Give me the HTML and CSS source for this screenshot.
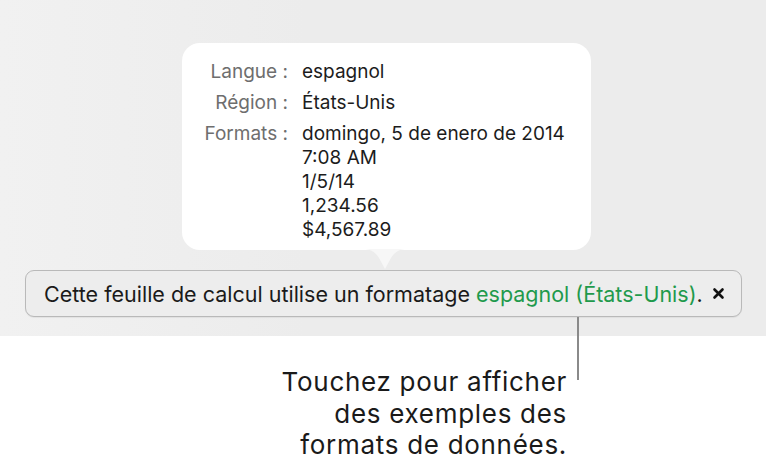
FILE: index.html
```html
<!DOCTYPE html>
<html lang="fr">
<head>
<meta charset="utf-8">
<link rel="stylesheet" href="styles.css">
</head>
<body>
<div class="stage">
  <div class="popover">
    <div class="grid">
      <div class="label">Langue :</div>
      <div class="value">espagnol</div>
      <div class="label">Région :</div>
      <div class="value">États-Unis</div>
      <div class="label">Formats :</div>
      <div class="value">domingo, 5 de enero de 2014<br>7:08 AM<br>1/5/14<br>1,234.56<br>$4,567.89</div>
    </div>
    <svg class="arrow" width="44" height="21" viewBox="0 0 44 21"><path d="M0 0 C8 0 12 3 16 9 L22 20 L28 9 C32 3 36 0 44 0 Z" fill="#f7f7f7"/></svg>
  </div>
  <div class="bar">
    <span class="msg">Cette feuille de calcul utilise un formatage <span class="green">espagnol (États-Unis)</span>.</span>
    <svg class="close" width="13" height="13" viewBox="0 0 13 13"><path d="M2.5 2.5 L10.5 10.5 M10.5 2.5 L2.5 10.5" stroke="#111" stroke-width="2.6" stroke-linecap="round"/></svg>
  </div>
</div>
<div class="leader"></div>
<div class="callout">Touchez pour afficher<br>des exemples des<br>formats de données.</div>
</body>
</html>
```
FILE: styles.css
```css
html, body {
  margin: 0;
  padding: 0;
  background: #ffffff;
  font-family: Inter, Roboto, "Liberation Sans", sans-serif;
}
body {
  width: 766px;
  height: 468px;
  overflow: hidden;
  position: relative;
}
.stage {
  height: 336px;
  box-sizing: border-box;
  padding: 43px 0 0 25px;
  background: linear-gradient(90deg, #f1f1f1 0%, #ececec 40%, #ececec 100%);
}
.popover {
  position: relative;
  width: 409px;
  height: 207px;
  margin-left: 157px;
  box-sizing: border-box;
  padding-top: 17px;
  background: #ffffff;
  border-radius: 18px;
}
.grid {
  display: grid;
  grid-template-columns: 106px 1fr;
  column-gap: 14px;
  row-gap: 7px;
  font-size: 19px;
  line-height: 24px;
}
.label {
  text-align: right;
  color: #6e6e6e;
}
.value {
  color: #1c1c1c;
}
.arrow {
  position: absolute;
  left: 181px;
  bottom: -20px;
  display: block;
}
.bar {
  width: 717px;
  height: 47px;
  margin-top: 20px;
  box-sizing: border-box;
  border: 1px solid #b9b9b9;
  border-radius: 9px;
  background: #ededed;
  box-shadow: 0 1px 1px rgba(0,0,0,0.06);
  display: flex;
  align-items: center;
  padding-left: 18px;
  font-size: 21.5px;
  color: #1a1a1a;
}
.green {
  color: #1f9a4c;
}
.close {
  margin-left: 9px;
  display: block;
}
.leader {
  position: absolute;
  left: 577px;
  top: 317px;
  width: 2px;
  height: 63px;
  background: #8a8a8a;
}
.callout {
  margin-top: 30px;
  width: 567px;
  text-align: right;
  font-size: 26px;
  letter-spacing: 0.7px;
  line-height: 31.5px;
  color: #1a1a1a;
}
```
